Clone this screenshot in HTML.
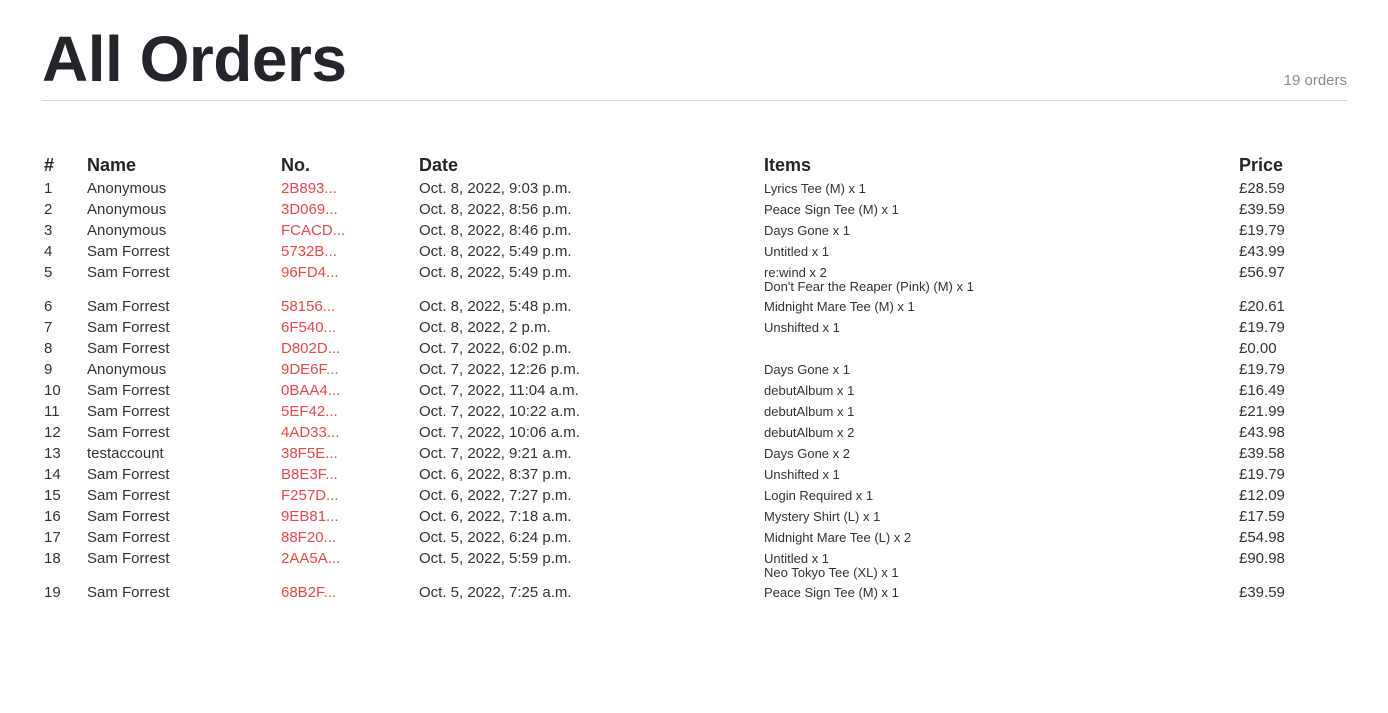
<!DOCTYPE html>
<html><head><meta charset="utf-8"><style>
body{margin:0;background:#fff;font-family:"Liberation Sans",sans-serif;color:#222;}
.wrap{position:relative;width:1388px;height:713px;}
h1{position:absolute;left:42px;top:21px;margin:0;font-size:64px;font-weight:bold;color:#23252a;letter-spacing:-0.5px;line-height:76px;}
.cnt{position:absolute;right:41px;top:72px;font-size:15px;color:#8a8a8a;}
.hr{position:absolute;left:42px;width:1305px;top:100px;height:1px;background:#d8d8d8;}
table{position:absolute;left:44px;top:152px;border-collapse:collapse;}
td,th{padding:0;text-align:left;vertical-align:top;white-space:nowrap;}
th{height:26px;line-height:26px;font-size:18px;font-weight:bold;color:#23252a;}
td{height:21px;line-height:21px;font-size:15px;color:#333;}
td.no{color:#f0454a;}
td.it{font-size:13px;line-height:14px;padding:4px 0 1px 0;height:auto;}
tr.two td{height:34px;}
tr.two td.it{height:auto;padding-bottom:2px;}
</style></head><body><div class="wrap">
<h1>All Orders</h1><div class="cnt">19 orders</div><div class="hr"></div>
<table>
<colgroup><col style="width:43px"><col style="width:194px"><col style="width:138px"><col style="width:345px"><col style="width:475px"><col style="width:80px"></colgroup>
<tr><th>#</th><th>Name</th><th>No.</th><th>Date</th><th>Items</th><th>Price</th></tr>
<tr><td>1</td><td>Anonymous</td><td class="no">2B893...</td><td>Oct. 8, 2022, 9:03 p.m.</td><td class="it">Lyrics Tee (M) x 1</td><td>£28.59</td></tr>
<tr><td>2</td><td>Anonymous</td><td class="no">3D069...</td><td>Oct. 8, 2022, 8:56 p.m.</td><td class="it">Peace Sign Tee (M) x 1</td><td>£39.59</td></tr>
<tr><td>3</td><td>Anonymous</td><td class="no">FCACD...</td><td>Oct. 8, 2022, 8:46 p.m.</td><td class="it">Days Gone x 1</td><td>£19.79</td></tr>
<tr><td>4</td><td>Sam Forrest</td><td class="no">5732B...</td><td>Oct. 8, 2022, 5:49 p.m.</td><td class="it">Untitled x 1</td><td>£43.99</td></tr>
<tr class="two"><td>5</td><td>Sam Forrest</td><td class="no">96FD4...</td><td>Oct. 8, 2022, 5:49 p.m.</td><td class="it">re:wind x 2<br>Don't Fear the Reaper (Pink) (M) x 1</td><td>£56.97</td></tr>
<tr><td>6</td><td>Sam Forrest</td><td class="no">58156...</td><td>Oct. 8, 2022, 5:48 p.m.</td><td class="it">Midnight Mare Tee (M) x 1</td><td>£20.61</td></tr>
<tr><td>7</td><td>Sam Forrest</td><td class="no">6F540...</td><td>Oct. 8, 2022, 2 p.m.</td><td class="it">Unshifted x 1</td><td>£19.79</td></tr>
<tr><td>8</td><td>Sam Forrest</td><td class="no">D802D...</td><td>Oct. 7, 2022, 6:02 p.m.</td><td class="it"></td><td>£0.00</td></tr>
<tr><td>9</td><td>Anonymous</td><td class="no">9DE6F...</td><td>Oct. 7, 2022, 12:26 p.m.</td><td class="it">Days Gone x 1</td><td>£19.79</td></tr>
<tr><td>10</td><td>Sam Forrest</td><td class="no">0BAA4...</td><td>Oct. 7, 2022, 11:04 a.m.</td><td class="it">debutAlbum x 1</td><td>£16.49</td></tr>
<tr><td>11</td><td>Sam Forrest</td><td class="no">5EF42...</td><td>Oct. 7, 2022, 10:22 a.m.</td><td class="it">debutAlbum x 1</td><td>£21.99</td></tr>
<tr><td>12</td><td>Sam Forrest</td><td class="no">4AD33...</td><td>Oct. 7, 2022, 10:06 a.m.</td><td class="it">debutAlbum x 2</td><td>£43.98</td></tr>
<tr><td>13</td><td>testaccount</td><td class="no">38F5E...</td><td>Oct. 7, 2022, 9:21 a.m.</td><td class="it">Days Gone x 2</td><td>£39.58</td></tr>
<tr><td>14</td><td>Sam Forrest</td><td class="no">B8E3F...</td><td>Oct. 6, 2022, 8:37 p.m.</td><td class="it">Unshifted x 1</td><td>£19.79</td></tr>
<tr><td>15</td><td>Sam Forrest</td><td class="no">F257D...</td><td>Oct. 6, 2022, 7:27 p.m.</td><td class="it">Login Required x 1</td><td>£12.09</td></tr>
<tr><td>16</td><td>Sam Forrest</td><td class="no">9EB81...</td><td>Oct. 6, 2022, 7:18 a.m.</td><td class="it">Mystery Shirt (L) x 1</td><td>£17.59</td></tr>
<tr><td>17</td><td>Sam Forrest</td><td class="no">88F20...</td><td>Oct. 5, 2022, 6:24 p.m.</td><td class="it">Midnight Mare Tee (L) x 2</td><td>£54.98</td></tr>
<tr class="two"><td>18</td><td>Sam Forrest</td><td class="no">2AA5A...</td><td>Oct. 5, 2022, 5:59 p.m.</td><td class="it">Untitled x 1<br>Neo Tokyo Tee (XL) x 1</td><td>£90.98</td></tr>
<tr><td>19</td><td>Sam Forrest</td><td class="no">68B2F...</td><td>Oct. 5, 2022, 7:25 a.m.</td><td class="it">Peace Sign Tee (M) x 1</td><td>£39.59</td></tr>
</table>
</div></body></html>
